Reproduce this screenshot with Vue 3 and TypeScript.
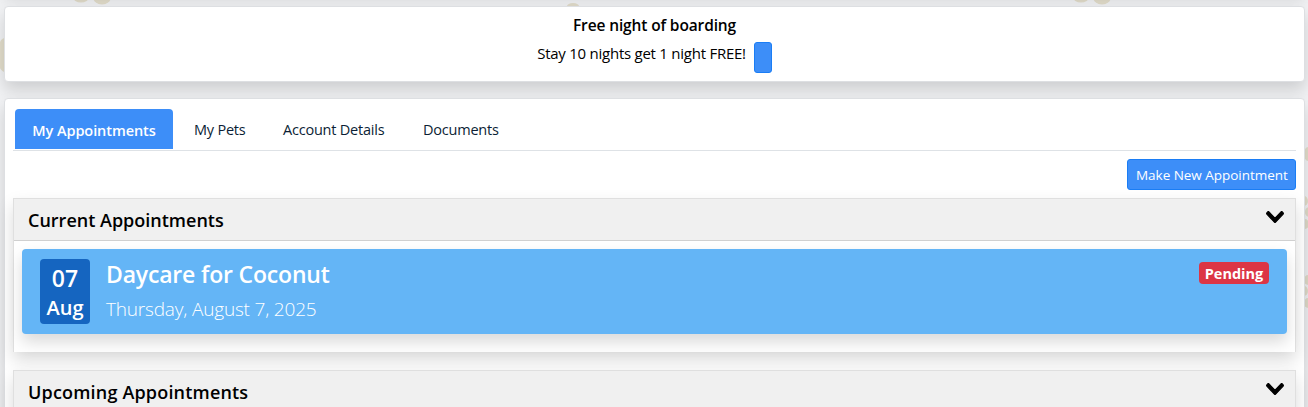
<script setup lang="ts">
interface Tab { id: string; label: string }

const tabs: Tab[] = [
  { id: 'pets', label: 'My Pets' },
  { id: 'account', label: 'Account Details' },
  { id: 'documents', label: 'Documents' },
]

const chevron = 'M207.029 381.476L12.686 187.132c-9.373-9.373-9.373-24.569 0-33.941l22.667-22.667c9.357-9.357 24.522-9.375 33.901-.04L224 284.505l154.745-154.021c9.379-9.335 24.544-9.317 33.901.04l22.667 22.667c9.373 9.373 9.373 24.569 0 33.941L240.971 381.476c-9.373 9.372-24.569 9.372-33.942 0z'
</script>

<template>
  <div class="page">
    <svg class="paws" width="1308" height="407" viewBox="0 0 1308 407" aria-hidden="true">
      <g fill="#e2ddcb">
        <ellipse cx="81" cy="-3" rx="8" ry="5.5" />
        <ellipse cx="102" cy="-3" rx="9" ry="7.5" />
        <ellipse cx="573" cy="6" rx="6" ry="3" />
        <ellipse cx="1081" cy="-3" rx="8" ry="5.5" />
        <ellipse cx="1102" cy="-3" rx="9" ry="7.5" />
        <ellipse cx="5" cy="55" rx="8" ry="17" />
        <ellipse cx="1308" cy="154" rx="4" ry="7" />
        <ellipse cx="1304" cy="201" rx="4" ry="5" />
        <ellipse cx="1309" cy="212" rx="4" ry="5" />
        <ellipse cx="1305" cy="224" rx="4" ry="5" />
        <ellipse cx="1308" cy="280" rx="4" ry="5" />
        <ellipse cx="1304" cy="291" rx="4" ry="5" />
        <ellipse cx="1308" cy="303" rx="4" ry="5" />
      </g>
    </svg>

    <div class="stack">
      <div class="card previous"></div>

      <section class="card promo">
        <h2>Free night of boarding</h2>
        <div class="offer">
          <span class="offer-text">Stay 10 nights get 1 night FREE!</span>
          <button class="btn empty" type="button" aria-label="Offer"></button>
        </div>
      </section>

      <section class="card main">
        <nav class="tabs">
          <a class="tab active">My Appointments</a>
          <a v-for="tab in tabs" :key="tab.id" class="tab" :class="tab.id">{{ tab.label }}</a>
        </nav>
        <div class="actions">
          <button class="btn" type="button">Make New Appointment</button>
        </div>

        <div class="panel current">
          <header>
            <h3>Current Appointments</h3>
            <svg class="chevron" width="18" height="12" viewBox="-8 110 464 292" preserveAspectRatio="none"><path :d="chevron" /></svg>
          </header>
          <div class="body">
            <article class="appointment">
              <div class="date"><span class="day">07</span><span class="month">Aug</span></div>
              <div class="info">
                <div class="title">Daycare for Coconut</div>
                <div class="when">Thursday, August 7, 2025</div>
              </div>
              <span class="badge">Pending</span>
            </article>
          </div>
        </div>

        <div class="panel upcoming">
          <header>
            <h3>Upcoming Appointments</h3>
            <svg class="chevron" width="18" height="12" viewBox="-8 110 464 292" preserveAspectRatio="none"><path :d="chevron" /></svg>
          </header>
          <div class="body"></div>
        </div>
      </section>
    </div>
  </div>
</template>

<style>
body { margin: 0; overflow: hidden; }
</style>

<style scoped>
* { box-sizing: border-box; }
.page {
  position: relative;
  width: 1308px;
  height: 407px;
  overflow: hidden;
  background: #f1f2f4;
  font-family: "Segoe UI", "Open Sans", "Noto Sans", sans-serif;
  font-size: 14.5px;
  color: #000;
  white-space: nowrap;
}
.paws { position: absolute; inset: 0; filter: blur(0.7px); }
.stack {
  position: relative;
  display: flex;
  flex-direction: column;
  gap: 16px;
  margin: -30px 3px 0 4px;
}
.card {
  background: #fff;
  border: 1px solid #dddfe2;
  border-radius: 4px;
  box-shadow: 0 8px 16px rgba(0, 0, 0, 0.15);
  flex-shrink: 0;
}
.previous { height: 20px; }
.promo {
  height: 76px;
  display: flex;
  flex-direction: column;
  align-items: center;
}
h2, h3 { margin: 0; font-weight: 600; }
h2 { margin-top: 7px; height: 25px; font-size: 15.5px; line-height: 22px; letter-spacing: -0.13px; }
.offer { display: flex; gap: 8px; margin-top: 3px; }
.offer-text { font-size: 15px; line-height: 22px; letter-spacing: -0.25px; }
.btn {
  height: 31px;
  padding: 0 8px;
  border: 1px solid #1a7df5;
  border-radius: 3px;
  background: #3d8ef8;
  color: #fff;
  font: inherit;
  font-size: 13.5px;
  letter-spacing: -0.03px;
}
.btn.empty { width: 18px; }
.main { height: 600px; padding: 10px 8px 0; }
.tabs {
  display: flex;
  height: 42px;
  padding-left: 2px;
  border-bottom: 1px solid #dee2e6;
}
.tab {
  height: 40px;
  line-height: 41px;
  letter-spacing: -0.22px;
  color: #0b1e35;
}
.tab.active {
  width: 158px;
  margin-right: 21px;
  border-radius: 4px 4px 0 0;
  background: #3d8ef8;
  color: #fff;
  font-weight: 600;
  letter-spacing: -0.08px;
  text-align: center;
  line-height: 43px;
}
.tab.pets { width: 89px; }
.tab.account { width: 140px; }
.actions { display: flex; justify-content: flex-end; margin-top: 8px; height: 39px; }
.actions .btn { width: 169px; }
.panel {
  border: 1px solid #dfdfdf;
  background: #fff;
  box-shadow: 0 8px 16px rgba(0, 0, 0, 0.15);
}
.panel header {
  height: 42px;
  display: flex;
  justify-content: space-between;
  padding: 0 11px 0 14px;
  border-bottom: 1px solid #d0d0d0;
  background: #f0f0f0;
}
.panel h3 { font-size: 18px; line-height: 43px; }
.panel.upcoming h3 { letter-spacing: 0.18px; }
.chevron { margin-top: 12px; fill: #000; stroke: #000; stroke-width: 26; }
.body { padding: 8px; }
.current { height: 154px; border-bottom: 0; }
.upcoming { height: 154px; margin-top: 18px; }
.appointment {
  display: flex;
  height: 85px;
  padding: 10px 18px;
  border-radius: 4px;
  background: #64b5f6;
  color: #fff;
  box-shadow: 0 8px 16px rgba(0, 0, 0, 0.15);
}
.date {
  width: 50px;
  height: 65px;
  display: flex;
  flex-direction: column;
  align-items: center;
  border-radius: 4px;
  background: #1565c0;
  font-weight: 600;
}
.day { margin-top: 4px; font-size: 23px; line-height: 30px; }
.month { font-size: 20px; line-height: 30px; }
.info { margin-left: 16px; }
.title { font-size: 23px; line-height: 30px; font-weight: 600; letter-spacing: -0.18px; }
.when { margin-top: 7px; font-size: 19px; line-height: 27px; font-weight: 300; letter-spacing: -0.18px; }
.badge {
  width: 70px;
  height: 22px;
  margin: 3px 0 0 auto;
  border-radius: 4px;
  background: #dc3545;
  font-size: 14.5px;
  line-height: 24px;
  font-weight: 700;
  text-align: center;
}
</style>
